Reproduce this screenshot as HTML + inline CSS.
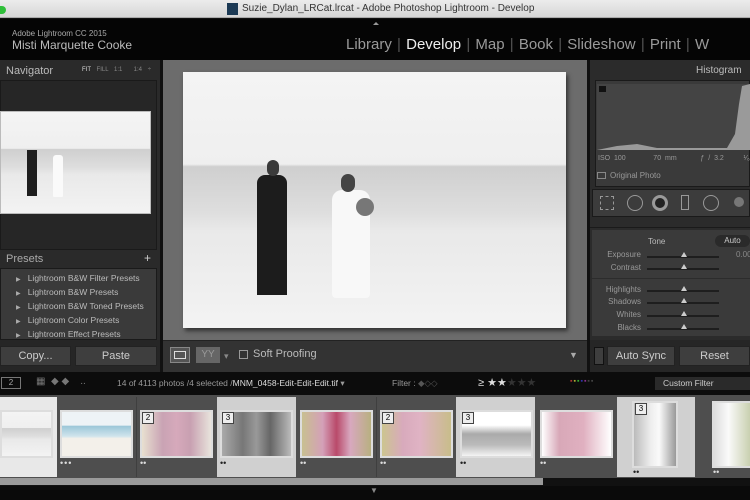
<!DOCTYPE html><html><head><style>
*{margin:0;padding:0;box-sizing:border-box}
body{width:750px;height:500px;overflow:hidden;background:#111;font-family:"Liberation Sans",sans-serif;position:relative}
.a{position:absolute}
.t{color:#c8c8c8;font-size:9px;white-space:nowrap}
.beach{background:linear-gradient(#f4f4f4 0%,#efefef 36%,#cfcfcf 37%,#dedede 55%,#e9e9e9 62%,#f3f3f3 100%)}
.btn{background:#3e3e3e;border:1px solid #222;color:#ccc;font-size:11px;text-align:center;line-height:18px}
.sl{position:absolute;left:647px;width:72px;height:2px;background:#1e1e1e}
.knob{position:absolute;left:681px;width:0;height:0;border-left:3px solid transparent;border-right:3px solid transparent;border-bottom:5px solid #ccc}
.lab{position:absolute;left:594px;width:47px;text-align:right;font-size:8px;color:#999;white-space:nowrap;line-height:10px}
.pr{position:absolute;left:16px;font-size:8.5px;color:#bbb;white-space:nowrap;line-height:10px}
.thumbcell{position:absolute;top:397px;height:80px}
.th{position:absolute;border:2px solid #ddd}
</style></head><body>
<div class="a" style="left:0;top:0;width:750px;height:18px;background:linear-gradient(#ececec,#d6d6d6);border-bottom:1px solid #aaa"></div>
<div class="a" style="left:0;top:6px;width:6px;height:8px;border-radius:0 4px 4px 0;background:#2fbf3a"></div>
<div class="a" style="left:227px;top:3px;width:11px;height:12px;background:#1c3a55"></div>
<div class="a" style="left:242px;top:3px;font-size:10px;color:#333">Suzie_Dylan_LRCat.lrcat - Adobe Photoshop Lightroom - Develop</div>
<div class="a" style="left:0;top:19px;width:750px;height:41px;background:#050505"></div>
<div class="a" style="left:12px;top:29px;font-size:8px;color:#aaa">Adobe Lightroom CC 2015</div>
<div class="a" style="left:12px;top:38px;font-size:12px;color:#bbb">Misti Marquette Cooke</div>
<div class="a" style="left:346px;top:36px;font-size:15px;color:#9a9a9a;white-space:nowrap;word-spacing:1px">Library <span style="color:#555">|</span> <span style="color:#eee">Develop</span> <span style="color:#555">|</span> Map <span style="color:#555">|</span> Book <span style="color:#555">|</span> Slideshow <span style="color:#555">|</span> Print <span style="color:#555">|</span> W</div>
<div class="a" style="left:373px;top:22px;border-left:3px solid transparent;border-right:3px solid transparent;border-bottom:3px solid #999"></div>
<div class="a" style="left:0;top:60px;width:160px;height:312px;background:#2a2a2a"></div>
<div class="a" style="left:160px;top:60px;width:3px;height:312px;background:#111"></div>
<div class="a" style="left:6px;top:65px;font-size:11px;color:#bbb">Navigator</div>
<div class="a" style="left:82px;top:67px;font-size:6px;color:#888;word-spacing:4px"><span style="color:#ddd">FIT</span> FILL 1:1 &nbsp;1:4 ÷</div>
<div class="a" style="left:0;top:80px;width:157px;height:170px;background:#262626;border:1px solid #1a1a1a"></div>
<div class="a beach" style="left:0;top:111px;width:151px;height:103px;border:1px solid #bbb"></div>
<div class="a" style="left:27px;top:150px;width:10px;height:46px;background:#1e1e1e"></div>
<div class="a" style="left:53px;top:155px;width:10px;height:42px;background:#fafafa;border-radius:3px 3px 1px 1px"></div>
<div class="a" style="left:6px;top:253px;font-size:11px;color:#aaa">Presets</div>
<div class="a" style="left:144px;top:251px;font-size:12px;color:#ccc">+</div>
<div class="a" style="left:0;top:268px;width:157px;height:72px;background:#3a3a3a;border:1px solid #1a1a1a"></div>
<div class="pr" style="top:273px"><span style="font-size:6px;color:#aaa">▶</span>&nbsp;&nbsp; Lightroom B&amp;W Filter Presets</div>
<div class="pr" style="top:287px"><span style="font-size:6px;color:#aaa">▶</span>&nbsp;&nbsp; Lightroom B&amp;W Presets</div>
<div class="pr" style="top:301px"><span style="font-size:6px;color:#aaa">▶</span>&nbsp;&nbsp; Lightroom B&amp;W Toned Presets</div>
<div class="pr" style="top:315px"><span style="font-size:6px;color:#aaa">▶</span>&nbsp;&nbsp; Lightroom Color Presets</div>
<div class="pr" style="top:329px"><span style="font-size:6px;color:#aaa">▶</span>&nbsp;&nbsp; Lightroom Effect Presets</div>
<div class="a" style="left:0;top:340px;width:160px;height:32px;background:#262626"></div>
<div class="a btn" style="left:0;top:346px;width:71px;height:20px">Copy...</div>
<div class="a btn" style="left:75px;top:346px;width:82px;height:20px">Paste</div>
<div class="a" style="left:163px;top:60px;width:424px;height:280px;background:#6c6c6c"></div>
<div class="a beach" style="left:183px;top:72px;width:383px;height:256px;box-shadow:2px 3px 4px #333"></div>
<div class="a" style="left:257px;top:175px;width:30px;height:120px;background:#1c1c1c;border-radius:8px 8px 0 0"></div>
<div class="a" style="left:267px;top:160px;width:12px;height:16px;background:#3a3a3a;border-radius:6px"></div>
<div class="a" style="left:332px;top:190px;width:38px;height:108px;background:#f8f8f8;border-radius:10px 10px 4px 4px"></div>
<div class="a" style="left:341px;top:174px;width:14px;height:18px;background:#444;border-radius:7px"></div>
<div class="a" style="left:356px;top:198px;width:18px;height:18px;background:#777;border-radius:9px"></div>
<div class="a" style="left:163px;top:340px;width:424px;height:32px;background:#333;border-top:1px solid #222"></div>
<div class="a" style="left:170px;top:347px;width:20px;height:16px;background:#555;border:1px solid #888"></div>
<div class="a" style="left:174px;top:351px;width:12px;height:8px;border:1px solid #ddd"></div>
<div class="a" style="left:196px;top:347px;width:24px;height:16px;background:#666;font-size:10px;color:#999;text-align:center;line-height:16px">YY</div>
<div class="a t" style="left:224px;top:351px;color:#888">▾</div>
<div class="a" style="left:239px;top:350px;width:9px;height:9px;border:1px solid #999"></div>
<div class="a" style="left:253px;top:348px;font-size:11px;color:#bbb">Soft Proofing</div>
<div class="a t" style="left:569px;top:350px;color:#aaa">▼</div>
<div class="a" style="left:587px;top:60px;width:3px;height:312px;background:#111"></div>
<div class="a" style="left:590px;top:60px;width:160px;height:312px;background:#2b2b2b"></div>
<div class="a" style="left:696px;top:65px;font-size:10px;color:#bbb">Histogram</div>
<div class="a" style="left:595px;top:80px;width:155px;height:107px;background:#3a3a3a;border:1px solid #1a1a1a"></div>
<div class="a" style="left:597px;top:84px;width:153px;height:66px;background:#444"></div>
<svg class="a" style="left:597px;top:84px" width="153" height="66"><path d="M0 66 L20 62 L40 60 L60 64 L130 64 L138 50 L142 20 L145 2 L153 0 L153 66Z" fill="#9a9a9a"/></svg>
<div class="a" style="left:599px;top:86px;width:7px;height:6px;background:#111"></div>
<div class="a t" style="left:598px;top:155px;font-size:7px;color:#999;word-spacing:2px">ISO 100 &nbsp;&nbsp;&nbsp;&nbsp;&nbsp; 70 mm &nbsp;&nbsp;&nbsp;&nbsp; ƒ / 3.2 &nbsp;&nbsp;&nbsp; ¹⁄₆₄₀ SE</div>
<div class="a" style="left:597px;top:172px;width:9px;height:7px;border:1px solid #888"></div>
<div class="a t" style="left:610px;top:171px;font-size:8px;color:#999">Original Photo</div>
<div class="a" style="left:592px;top:189px;width:158px;height:28px;background:#3c3c3c;border:1px solid #1a1a1a"></div>
<div class="a" style="left:600px;top:196px;width:14px;height:14px;border:1px dashed #999"></div>
<div class="a" style="left:627px;top:195px;width:16px;height:16px;border:1px solid #999;border-radius:50%"></div>
<div class="a" style="left:652px;top:195px;width:16px;height:16px;border:3px solid #999;border-radius:50%;background:#222"></div>
<div class="a" style="left:681px;top:195px;width:8px;height:15px;border:1px solid #999"></div>
<div class="a" style="left:703px;top:195px;width:16px;height:16px;border:1px solid #999;border-radius:50%"></div>
<div class="a" style="left:734px;top:197px;width:10px;height:10px;background:#777;border-radius:50%"></div>
<div class="a" style="left:590px;top:218px;width:160px;height:10px;background:#2b2b2b;border-bottom:1px solid #1a1a1a"></div>
<div class="a" style="left:592px;top:230px;width:158px;height:106px;background:#3a3a3a"></div>
<div class="a t" style="left:648px;top:237px;font-size:8px;color:#bbb">Tone</div>
<div class="a" style="left:715px;top:235px;width:35px;height:12px;background:#2a2a2a;border-radius:6px;font-size:8px;color:#ccc;text-align:center;line-height:12px">Auto</div>
<div class="lab" style="top:250px">Exposure</div>
<div class="lab" style="top:263px">Contrast</div>
<div class="lab" style="top:285px">Highlights</div>
<div class="lab" style="top:297px">Shadows</div>
<div class="lab" style="top:310px">Whites</div>
<div class="lab" style="top:323px">Blacks</div>
<div class="sl" style="top:256px"></div><div class="knob" style="top:252px"></div>
<div class="sl" style="top:268px"></div><div class="knob" style="top:264px"></div>
<div class="a" style="left:592px;top:278px;width:158px;height:1px;background:#2c2c2c"></div>
<div class="sl" style="top:290px"></div><div class="knob" style="top:286px"></div>
<div class="sl" style="top:302px"></div><div class="knob" style="top:298px"></div>
<div class="sl" style="top:315px"></div><div class="knob" style="top:311px"></div>
<div class="sl" style="top:328px"></div><div class="knob" style="top:324px"></div>
<div class="a t" style="left:736px;top:250px;font-size:8px;color:#888">0.00</div>
<div class="a" style="left:590px;top:340px;width:160px;height:32px;background:#262626"></div>
<div class="a" style="left:594px;top:347px;width:10px;height:18px;background:#3e3e3e;border:1px solid #111"></div>
<div class="a btn" style="left:607px;top:346px;width:68px;height:20px">Auto Sync</div>
<div class="a btn" style="left:679px;top:346px;width:71px;height:20px">Reset</div>
<div class="a" style="left:0;top:372px;width:750px;height:23px;background:#0c0c0c"></div>
<div class="a" style="left:1px;top:377px;width:20px;height:12px;border:1px solid #777;font-size:8px;color:#aaa;text-align:center;line-height:10px">2</div>
<div class="a t" style="left:36px;top:376px;font-size:10px;color:#777">▦ &nbsp;◆ ◆ &nbsp;&nbsp;&nbsp;..</div>
<div class="a t" style="left:117px;top:378px;font-size:8.5px;color:#999">14 of 4113 photos /4 selected /<span style="color:#ddd">MNM_0458-Edit-Edit-Edit.tif</span> ▾</div>
<div class="a t" style="left:392px;top:378px;font-size:8.5px;color:#999">Filter : <span style="color:#555">◆◇◇</span></div>
<div class="a t" style="left:478px;top:376px;font-size:11px;color:#ddd">≥ ★★<span style="color:#333">★★★</span></div>
<div class="a t" style="left:570px;top:378px;font-size:7px;color:#444;letter-spacing:1px"><span style="color:#a33">▪</span><span style="color:#aa3">▪</span><span style="color:#3a3">▪</span><span style="color:#33a">▪</span><span style="color:#838">▪</span>▪▪</div>
<div class="a" style="left:655px;top:377px;width:95px;height:13px;background:#2a2a2a;font-size:8.5px;color:#ccc;line-height:13px;padding-left:8px">Custom Filter</div>
<div class="a" style="left:0;top:395px;width:750px;height:83px;background:#4e4e4e"></div>
<div class="thumbcell" style="left:0;width:57px;background:#e8e8e8"></div>
<div class="thumbcell" style="left:217px;width:79px;background:#d0d0d0"></div>
<div class="thumbcell" style="left:456px;width:79px;background:#d0d0d0"></div>
<div class="thumbcell" style="left:617px;width:78px;background:#d0d0d0"></div>
<div class="a" style="left:136px;top:397px;width:1px;height:80px;background:#3f3f3f"></div>
<div class="a" style="left:376px;top:397px;width:1px;height:80px;background:#3f3f3f"></div>
<div class="th beach" style="left:0;top:410px;width:53px;height:48px"></div>
<div class="th" style="left:60px;top:410px;width:73px;height:48px;background:linear-gradient(#eef3f6 30%,#9cc7d8 32%,#cfe4ec 55%,#f3f0ea 60%)"></div>
<div class="th" style="left:140px;top:410px;width:73px;height:48px;background:linear-gradient(90deg,#e8e0d0,#c9a3b4 30%,#d6a9bb 50%,#c8a0b1 70%,#e8e4dc);"></div>
<div class="th" style="left:220px;top:410px;width:73px;height:48px;background:linear-gradient(90deg,#aaa,#777 30%,#999 50%,#666 70%,#bbb);"></div>
<div class="th" style="left:300px;top:410px;width:73px;height:48px;background:linear-gradient(90deg,#c8c090,#d4a0b8 30%,#b94a6a 50%,#d8a8bf 70%,#b8b080);"></div>
<div class="th" style="left:380px;top:410px;width:73px;height:48px;background:linear-gradient(90deg,#ccc58f,#d8aabc 30%,#e0b3c4 55%,#c8bd8a);"></div>
<div class="th" style="left:460px;top:410px;width:73px;height:48px;background:linear-gradient(#fff 30%,#aaa 50%,#bbb 75%,#f4f4f4)"></div>
<div class="th" style="left:540px;top:410px;width:73px;height:48px;background:linear-gradient(90deg,#fff,#d8a8b8 25%,#e0b0c0 60%,#fff)"></div>
<div class="th" style="left:632px;top:401px;width:46px;height:67px;background:linear-gradient(90deg,#bbb,#eee 40%,#fafafa 60%,#999)"></div>
<div class="th" style="left:712px;top:401px;width:40px;height:67px;background:linear-gradient(90deg,#ddd,#fafafa 40%,#c9d0b0)"></div>
<div class="a" style="left:142px;top:412px;width:12px;height:12px;background:#eee;border:1px solid #444;font-size:8px;text-align:center;line-height:10px">2</div>
<div class="a" style="left:222px;top:412px;width:12px;height:12px;background:#eee;border:1px solid #444;font-size:8px;text-align:center;line-height:10px">3</div>
<div class="a" style="left:382px;top:412px;width:12px;height:12px;background:#eee;border:1px solid #444;font-size:8px;text-align:center;line-height:10px">2</div>
<div class="a" style="left:462px;top:412px;width:12px;height:12px;background:#eee;border:1px solid #444;font-size:8px;text-align:center;line-height:10px">3</div>
<div class="a" style="left:635px;top:403px;width:12px;height:12px;background:#eee;border:1px solid #444;font-size:8px;text-align:center;line-height:10px">3</div>
<div class="a t" style="left:60px;top:458px;font-size:9px;color:#ddd;letter-spacing:1px">•••</div>
<div class="a t" style="left:140px;top:458px;font-size:9px;color:#ddd">••</div>
<div class="a t" style="left:220px;top:458px;font-size:9px;color:#222">••</div>
<div class="a t" style="left:300px;top:458px;font-size:9px;color:#ddd">••</div>
<div class="a t" style="left:380px;top:458px;font-size:9px;color:#ddd">••</div>
<div class="a t" style="left:460px;top:458px;font-size:9px;color:#222">••</div>
<div class="a t" style="left:540px;top:458px;font-size:9px;color:#ddd">••</div>
<div class="a t" style="left:633px;top:467px;font-size:9px;color:#222">••</div>
<div class="a t" style="left:713px;top:467px;font-size:9px;color:#ddd">••</div>
<div class="a" style="left:0;top:478px;width:750px;height:8px;background:#111"></div>
<div class="a" style="left:0;top:478px;width:543px;height:7px;background:#9a9a9a"></div>
<div class="a" style="left:0;top:486px;width:750px;height:14px;background:#0a0a0a"></div>
<div class="a t" style="left:370px;top:486px;font-size:8px;color:#888">▼</div>
</body></html>
